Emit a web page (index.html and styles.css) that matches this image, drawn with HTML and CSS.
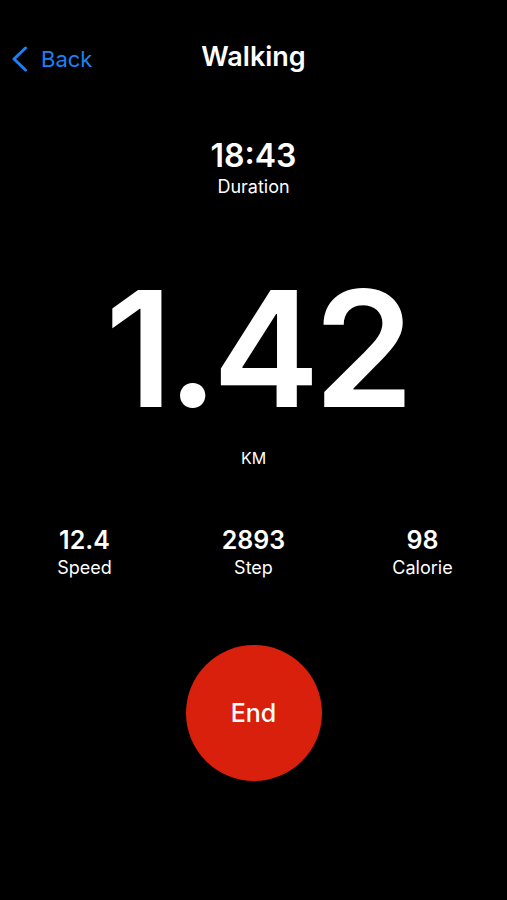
FILE: index.html
```html
<!DOCTYPE html>
<html lang="en">
<head>
<meta charset="utf-8">
<title>Walking</title>
<link rel="stylesheet" href="styles.css">
</head>
<body>
<div class="screen">
  <header class="nav">
    <a class="back" href="#">
      <svg class="chevron" width="16" height="26" viewBox="0 0 16 26" aria-hidden="true">
        <polyline points="13.5,2 2,13 13.5,24" fill="none" stroke="currentColor" stroke-width="3" stroke-linecap="round" stroke-linejoin="round"/>
      </svg>
      <span class="back-label">Back</span>
    </a>
    <h1 class="title">Walking</h1>
    <span class="nav-spacer"></span>
  </header>

  <section class="duration">
    <div class="duration-value">18:43</div>
    <div class="duration-label">Duration</div>
  </section>

  <section class="distance">
    <div class="distance-value"><span class="digits">1.42</span></div>
    <div class="distance-unit">KM</div>
  </section>

  <section class="stats">
    <div class="stat">
      <div class="stat-value">12.4</div>
      <div class="stat-label">Speed</div>
    </div>
    <div class="stat">
      <div class="stat-value">2893</div>
      <div class="stat-label">Step</div>
    </div>
    <div class="stat">
      <div class="stat-value">98</div>
      <div class="stat-label">Calorie</div>
    </div>
  </section>

  <div class="actions">
    <button class="end-button" type="button">End</button>
  </div>
</div>
</body>
</html>
```

FILE: styles.css
```css
html, body {
  margin: 0;
  padding: 0;
  background: #000;
}

body {
  font-family: Inter, "Noto Sans", "Liberation Sans", sans-serif;
  color: #fff;
  width: 507px;
  height: 900px;
  overflow: hidden;
}

.screen {
  display: flex;
  flex-direction: column;
  align-items: stretch;
}

.nav {
  display: grid;
  grid-template-columns: 1fr auto 1fr;
  align-items: center;
  height: 44px;
  margin-top: 34px;
}

.back {
  display: flex;
  align-items: center;
  gap: 13px;
  padding-left: 12px;
  padding-top: 6px;
  color: #1a82f5;
  text-decoration: none;
  justify-self: start;
}

.chevron {
  display: block;
}

.back-label {
  font-size: 22px;
  line-height: 1;
  font-weight: 400;
}

.title {
  margin: 0;
  font-size: 27px;
  line-height: 1;
  font-weight: 600;
}

.duration {
  display: flex;
  flex-direction: column;
  align-items: center;
  margin-top: 62px;
  gap: 6px;
}

.duration-value {
  font-size: 32px;
  line-height: 1;
  font-weight: 600;
}

.duration-label {
  font-size: 18px;
  line-height: 1;
  font-weight: 400;
}

.distance {
  display: flex;
  flex-direction: column;
  align-items: center;
  margin-top: 72px;
}

.distance-value {
  font-size: 161px;
  line-height: 1;
  font-weight: 600;
}

.digits {
  letter-spacing: -6px;
  margin-right: -6px;
}

.distance-unit {
  margin-top: 21px;
  font-size: 16px;
  line-height: 1;
  font-weight: 400;
}

.stats {
  display: grid;
  grid-template-columns: repeat(3, 1fr);
  margin-top: 62px;
}

.stat {
  display: flex;
  flex-direction: column;
  align-items: center;
  gap: 6px;
}

.stat-value {
  font-size: 25px;
  line-height: 1;
  font-weight: 600;
}

.stat-label {
  font-size: 18px;
  line-height: 1;
  font-weight: 400;
}

.actions {
  display: flex;
  justify-content: center;
  margin-top: 68px;
}

.end-button {
  width: 136px;
  height: 136px;
  border: none;
  border-radius: 50%;
  background: #d9200c;
  color: #fff;
  font-family: inherit;
  font-size: 25px;
  font-weight: 500;
  padding: 0;
  margin: 0;
}
```
